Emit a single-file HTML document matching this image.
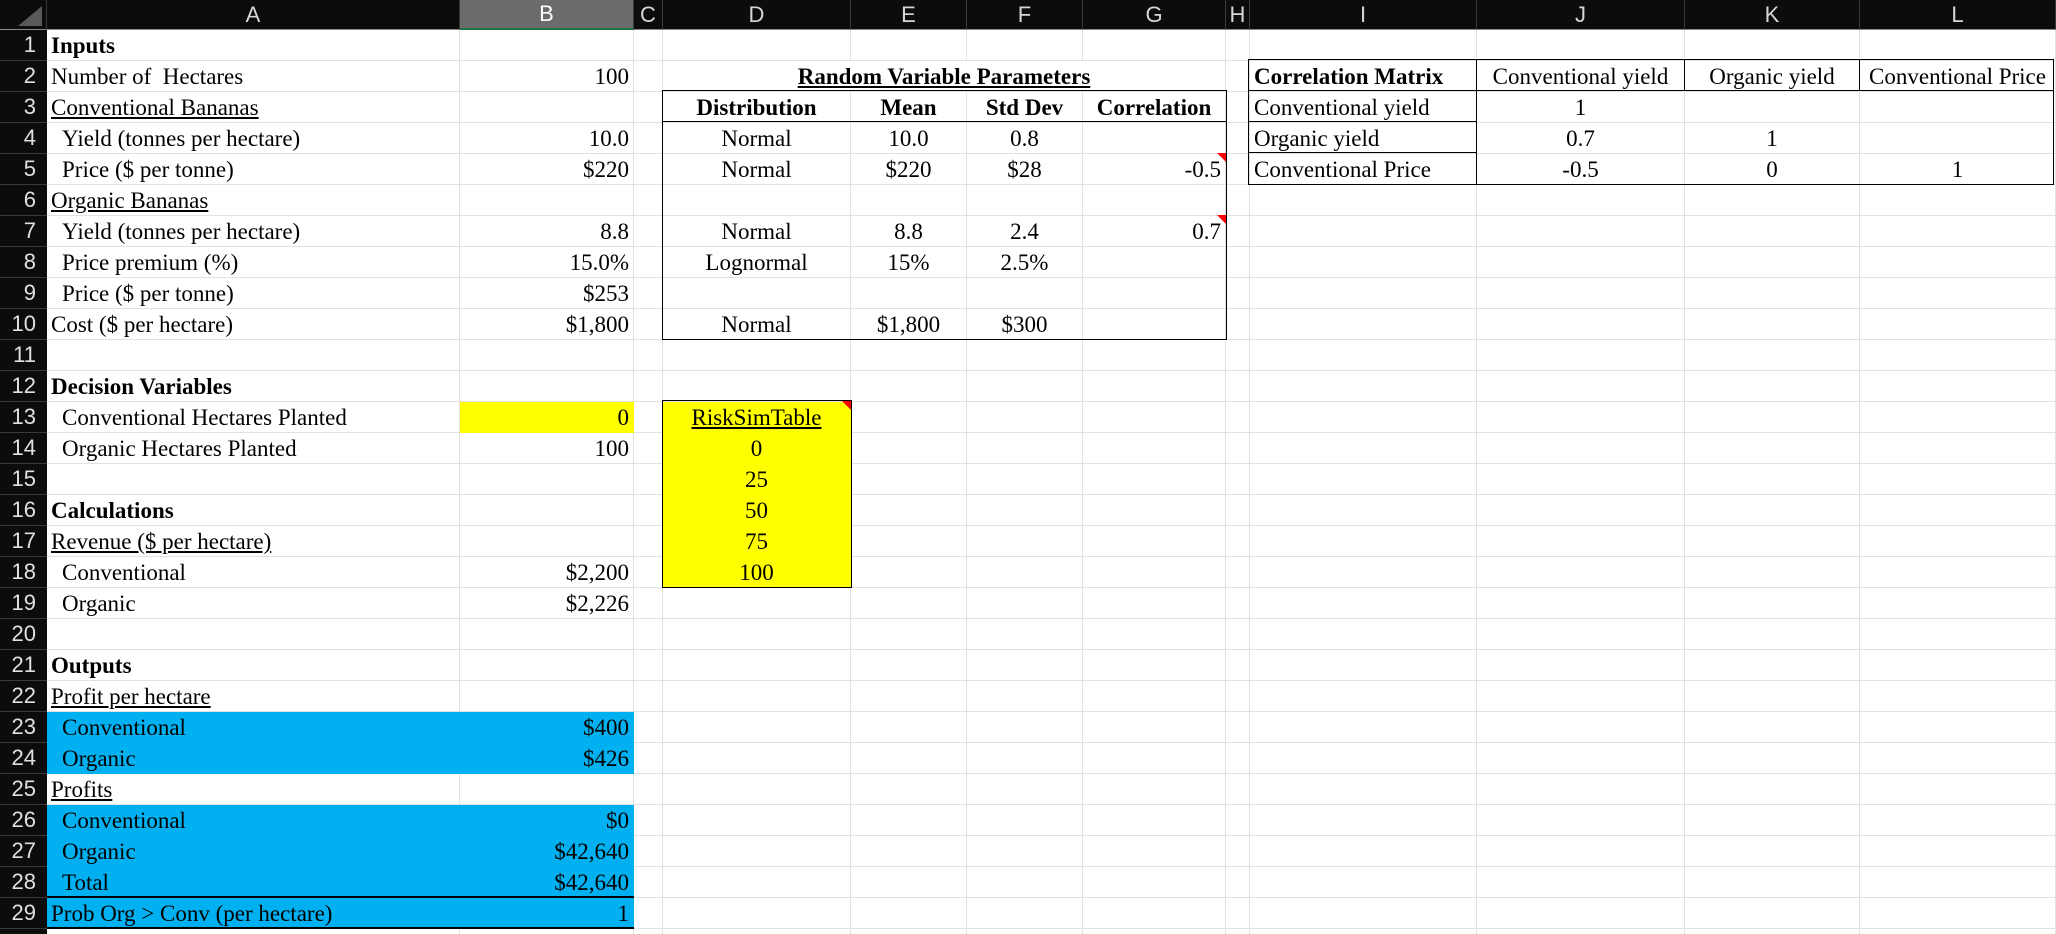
<!DOCTYPE html>
<html><head><meta charset="utf-8"><style>
*{margin:0;padding:0;box-sizing:border-box}
html,body{width:2056px;height:934px;overflow:hidden;background:#fff}
body{position:relative;font-family:"Liberation Serif",serif;font-size:23px;color:#000}
table{position:absolute;left:0;top:0;border-collapse:separate;border-spacing:0;table-layout:fixed;width:2056px}
td{height:31px;border-right:1px solid #e1e1e1;border-bottom:1px solid #e1e1e1;padding:2px 4px 0 4px;white-space:nowrap;overflow:visible;line-height:28px;vertical-align:bottom}
tr.h td{height:29px;background:#0c0c0c;color:#d6d6d6;font-family:"Liberation Sans",sans-serif;font-size:22px;text-align:center;border-right:1px solid #3a3a3a;border-bottom:1px solid #8a8a8a;line-height:28px;padding:0;vertical-align:middle}
td.n{background:#0c0c0c;color:#e0e0e0;font-family:"Liberation Sans",sans-serif;font-size:22px;text-align:right;border-right:none;border-bottom:1px solid #3a3a3a;padding:0 11px 0 0;line-height:30px}
.r{text-align:right}.c{text-align:center}.b{font-weight:bold}.u{text-decoration:underline}
.i{padding-left:15px}
.y{background:#ffff00;border-color:#ffff00}
.bl{background:#00b0f0;border-right-color:#00b0f0;border-bottom-color:#00b0f0}
.box{position:absolute;border:1px solid #000;pointer-events:none}
.ln{position:absolute;background:#000}
.tri{position:absolute;width:0;height:0;border-top:9px solid #f00;border-left:9px solid transparent}
</style></head><body>
<table>
<colgroup><col style="width:47px"><col style="width:413px"><col style="width:174px"><col style="width:29px"><col style="width:188px"><col style="width:116px"><col style="width:116px"><col style="width:143px"><col style="width:24px"><col style="width:227px"><col style="width:208px"><col style="width:175px"><col style="width:196px"></colgroup>
<tr class="h"><td style="background:#0c0c0c"></td><td>A</td><td style="background:#6b6b6b;color:#fff;border-bottom:2px solid #217346">B</td><td>C</td><td>D</td><td>E</td><td>F</td><td>G</td><td>H</td><td>I</td><td>J</td><td>K</td><td>L</td></tr>
<tr><td class="n">1</td><td class="b">Inputs</td><td></td><td></td><td></td><td></td><td></td><td></td><td></td><td></td><td></td><td></td><td></td></tr>
<tr><td class="n">2</td><td>Number of&nbsp; Hectares</td><td class="r">100</td><td></td><td colspan="4" class="c b u" style="border-right-color:#e1e1e1">Random Variable Parameters</td><td></td><td class="b">Correlation Matrix</td><td class="c">Conventional yield</td><td class="c">Organic yield</td><td class="c">Conventional Price</td></tr>
<tr><td class="n">3</td><td class="u">Conventional Bananas</td><td></td><td></td><td class="c b">Distribution</td><td class="c b">Mean</td><td class="c b">Std Dev</td><td class="c b">Correlation</td><td></td><td>Conventional yield</td><td class="c">1</td><td></td><td></td></tr>
<tr><td class="n">4</td><td class="i">Yield (tonnes per hectare)</td><td class="r">10.0</td><td></td><td class="c">Normal</td><td class="c">10.0</td><td class="c">0.8</td><td></td><td></td><td>Organic yield</td><td class="c">0.7</td><td class="c">1</td><td></td></tr>
<tr><td class="n">5</td><td class="i">Price ($ per tonne)</td><td class="r">$220</td><td></td><td class="c">Normal</td><td class="c">$220</td><td class="c">$28</td><td class="r">-0.5</td><td></td><td>Conventional Price</td><td class="c">-0.5</td><td class="c">0</td><td class="c">1</td></tr>
<tr><td class="n">6</td><td class="u">Organic Bananas</td><td></td><td></td><td></td><td></td><td></td><td></td><td></td><td></td><td></td><td></td><td></td></tr>
<tr><td class="n">7</td><td class="i">Yield (tonnes per hectare)</td><td class="r">8.8</td><td></td><td class="c">Normal</td><td class="c">8.8</td><td class="c">2.4</td><td class="r">0.7</td><td></td><td></td><td></td><td></td><td></td></tr>
<tr><td class="n">8</td><td class="i">Price premium (%)</td><td class="r">15.0%</td><td></td><td class="c">Lognormal</td><td class="c">15%</td><td class="c">2.5%</td><td></td><td></td><td></td><td></td><td></td><td></td></tr>
<tr><td class="n">9</td><td class="i">Price ($ per tonne)</td><td class="r">$253</td><td></td><td></td><td></td><td></td><td></td><td></td><td></td><td></td><td></td><td></td></tr>
<tr><td class="n">10</td><td>Cost ($ per hectare)</td><td class="r">$1,800</td><td></td><td class="c">Normal</td><td class="c">$1,800</td><td class="c">$300</td><td></td><td></td><td></td><td></td><td></td><td></td></tr>
<tr><td class="n">11</td><td></td><td></td><td></td><td></td><td></td><td></td><td></td><td></td><td></td><td></td><td></td><td></td></tr>
<tr><td class="n">12</td><td class="b">Decision Variables</td><td></td><td></td><td></td><td></td><td></td><td></td><td></td><td></td><td></td><td></td><td></td></tr>
<tr><td class="n">13</td><td class="i">Conventional Hectares Planted</td><td class="r y">0</td><td></td><td class="c u y">RiskSimTable</td><td></td><td></td><td></td><td></td><td></td><td></td><td></td><td></td></tr>
<tr><td class="n">14</td><td class="i">Organic Hectares Planted</td><td class="r">100</td><td></td><td class="c y">0</td><td></td><td></td><td></td><td></td><td></td><td></td><td></td><td></td></tr>
<tr><td class="n">15</td><td></td><td></td><td></td><td class="c y">25</td><td></td><td></td><td></td><td></td><td></td><td></td><td></td><td></td></tr>
<tr><td class="n">16</td><td class="b">Calculations</td><td></td><td></td><td class="c y">50</td><td></td><td></td><td></td><td></td><td></td><td></td><td></td><td></td></tr>
<tr><td class="n">17</td><td class="u">Revenue ($ per hectare)</td><td></td><td></td><td class="c y">75</td><td></td><td></td><td></td><td></td><td></td><td></td><td></td><td></td></tr>
<tr><td class="n">18</td><td class="i">Conventional</td><td class="r">$2,200</td><td></td><td class="c y">100</td><td></td><td></td><td></td><td></td><td></td><td></td><td></td><td></td></tr>
<tr><td class="n">19</td><td class="i">Organic</td><td class="r">$2,226</td><td></td><td></td><td></td><td></td><td></td><td></td><td></td><td></td><td></td><td></td></tr>
<tr><td class="n">20</td><td></td><td></td><td></td><td></td><td></td><td></td><td></td><td></td><td></td><td></td><td></td><td></td></tr>
<tr><td class="n">21</td><td class="b">Outputs</td><td></td><td></td><td></td><td></td><td></td><td></td><td></td><td></td><td></td><td></td><td></td></tr>
<tr><td class="n">22</td><td class="u">Profit per hectare</td><td></td><td></td><td></td><td></td><td></td><td></td><td></td><td></td><td></td><td></td><td></td></tr>
<tr><td class="n">23</td><td class="i bl">Conventional</td><td class="r bl">$400</td><td></td><td></td><td></td><td></td><td></td><td></td><td></td><td></td><td></td><td></td></tr>
<tr><td class="n">24</td><td class="i bl">Organic</td><td class="r bl">$426</td><td></td><td></td><td></td><td></td><td></td><td></td><td></td><td></td><td></td><td></td></tr>
<tr><td class="n">25</td><td class="u">Profits</td><td></td><td></td><td></td><td></td><td></td><td></td><td></td><td></td><td></td><td></td><td></td></tr>
<tr><td class="n">26</td><td class="i bl">Conventional</td><td class="r bl">$0</td><td></td><td></td><td></td><td></td><td></td><td></td><td></td><td></td><td></td><td></td></tr>
<tr><td class="n">27</td><td class="i bl">Organic</td><td class="r bl">$42,640</td><td></td><td></td><td></td><td></td><td></td><td></td><td></td><td></td><td></td><td></td></tr>
<tr><td class="n">28</td><td class="i bl">Total</td><td class="r bl">$42,640</td><td></td><td></td><td></td><td></td><td></td><td></td><td></td><td></td><td></td><td></td></tr>
<tr><td class="n">29</td><td class="bl">Prob Org &gt; Conv (per hectare)</td><td class="r bl">1</td><td></td><td></td><td></td><td></td><td></td><td></td><td></td><td></td><td></td><td></td></tr>
<tr><td class="n">30</td><td></td><td></td><td></td><td></td><td></td><td></td><td></td><td></td><td></td><td></td><td></td><td></td></tr>
</table>
<div style="position:absolute;left:18px;top:6px;width:0;height:0;border-bottom:20px solid #5a5a5a;border-left:24px solid transparent"></div>
<div class="box" style="left:662px;top:90px;width:565px;height:250px"></div>
<div class="ln" style="left:662px;top:121px;width:565px;height:1px"></div>
<div class="box" style="left:1248px;top:59px;width:806px;height:126px"></div>
<div class="ln" style="left:1248px;top:90px;width:806px;height:1px"></div>
<div class="ln" style="left:1476px;top:59px;width:1px;height:126px"></div>
<div class="ln" style="left:1684px;top:59px;width:1px;height:32px"></div>
<div class="ln" style="left:1859px;top:59px;width:1px;height:32px"></div>
<div class="ln" style="left:1248px;top:121px;width:229px;height:1px"></div>
<div class="ln" style="left:1248px;top:152px;width:229px;height:1px"></div>
<div class="box" style="left:662px;top:400px;width:190px;height:188px"></div>
<div class="ln" style="left:47px;top:896px;width:587px;height:2px"></div>
<div class="ln" style="left:47px;top:927px;width:587px;height:2px"></div>
<div class="tri" style="left:1217px;top:153px"></div>
<div class="tri" style="left:1217px;top:215px"></div>
<div class="tri" style="left:842px;top:401px"></div>
</body></html>
